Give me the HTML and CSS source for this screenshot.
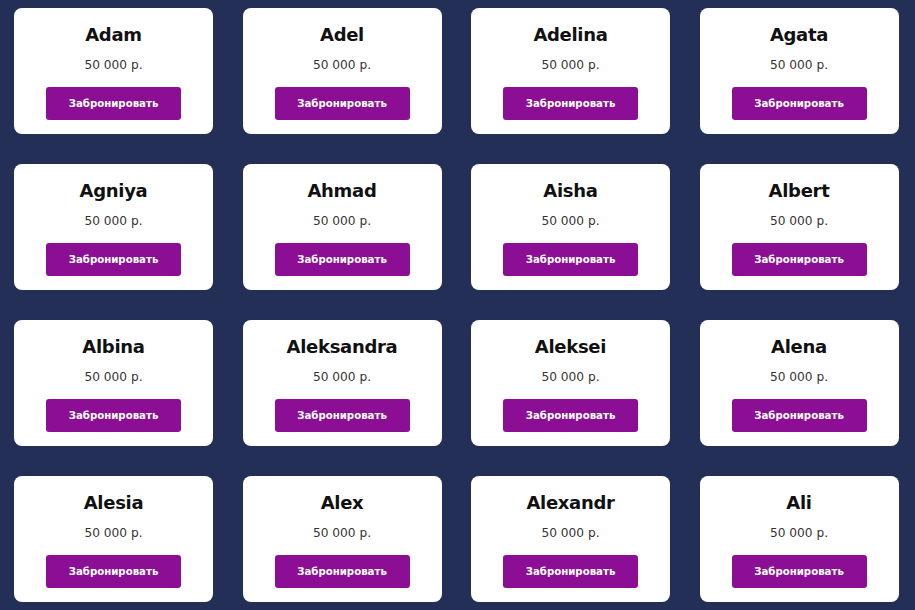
FILE: index.html
```html
<!DOCTYPE html>
<html lang="ru">
<head>
<meta charset="utf-8">
<title>Names</title>
<link rel="stylesheet" href="styles.css">
</head>
<body>
<main class="grid">
  <div class="card"><h2 class="name">Adam</h2><p class="price">50 000 р.</p><button class="btn">Забронировать</button></div>
  <div class="card"><h2 class="name">Adel</h2><p class="price">50 000 р.</p><button class="btn">Забронировать</button></div>
  <div class="card"><h2 class="name">Adelina</h2><p class="price">50 000 р.</p><button class="btn">Забронировать</button></div>
  <div class="card"><h2 class="name">Agata</h2><p class="price">50 000 р.</p><button class="btn">Забронировать</button></div>
  <div class="card"><h2 class="name">Agniya</h2><p class="price">50 000 р.</p><button class="btn">Забронировать</button></div>
  <div class="card"><h2 class="name">Ahmad</h2><p class="price">50 000 р.</p><button class="btn">Забронировать</button></div>
  <div class="card"><h2 class="name">Aisha</h2><p class="price">50 000 р.</p><button class="btn">Забронировать</button></div>
  <div class="card"><h2 class="name">Albert</h2><p class="price">50 000 р.</p><button class="btn">Забронировать</button></div>
  <div class="card"><h2 class="name">Albina</h2><p class="price">50 000 р.</p><button class="btn">Забронировать</button></div>
  <div class="card"><h2 class="name">Aleksandra</h2><p class="price">50 000 р.</p><button class="btn">Забронировать</button></div>
  <div class="card"><h2 class="name">Aleksei</h2><p class="price">50 000 р.</p><button class="btn">Забронировать</button></div>
  <div class="card"><h2 class="name">Alena</h2><p class="price">50 000 р.</p><button class="btn">Забронировать</button></div>
  <div class="card"><h2 class="name">Alesia</h2><p class="price">50 000 р.</p><button class="btn">Забронировать</button></div>
  <div class="card"><h2 class="name">Alex</h2><p class="price">50 000 р.</p><button class="btn">Забронировать</button></div>
  <div class="card"><h2 class="name">Alexandr</h2><p class="price">50 000 р.</p><button class="btn">Забронировать</button></div>
  <div class="card"><h2 class="name">Ali</h2><p class="price">50 000 р.</p><button class="btn">Забронировать</button></div>
</main>
</body>
</html>
```

FILE: styles.css
```css
html, body {
  margin: 0;
  padding: 0;
  background: #232f57;
  font-family: "DejaVu Sans", "Noto Sans", sans-serif;
}

.grid {
  display: grid;
  grid-template-columns: repeat(4, 199px);
  grid-auto-rows: 126px;
  column-gap: 29.5px;
  row-gap: 30px;
  padding: 8px 0 0 14px;
}

.card {
  background: #ffffff;
  border-radius: 8px;
  display: flex;
  flex-direction: column;
  align-items: center;
  padding: 15px 0 0;
  box-sizing: border-box;
}

.name {
  margin: 0;
  font-size: 18px;
  line-height: 24px;
  font-weight: 700;
  color: #111111;
  letter-spacing: -0.3px;
}

.price {
  margin: 9px 0 0;
  font-size: 12.2px;
  line-height: 18px;
  color: #333333;
}

.btn {
  margin-top: 13px;
  width: 135px;
  height: 33px;
  border: none;
  border-radius: 3px;
  background: #8c0e95;
  color: #ffffff;
  font-family: "DejaVu Sans", "Noto Sans", sans-serif;
  font-size: 10.2px;
  font-weight: 700;
  padding: 0;
}
```
